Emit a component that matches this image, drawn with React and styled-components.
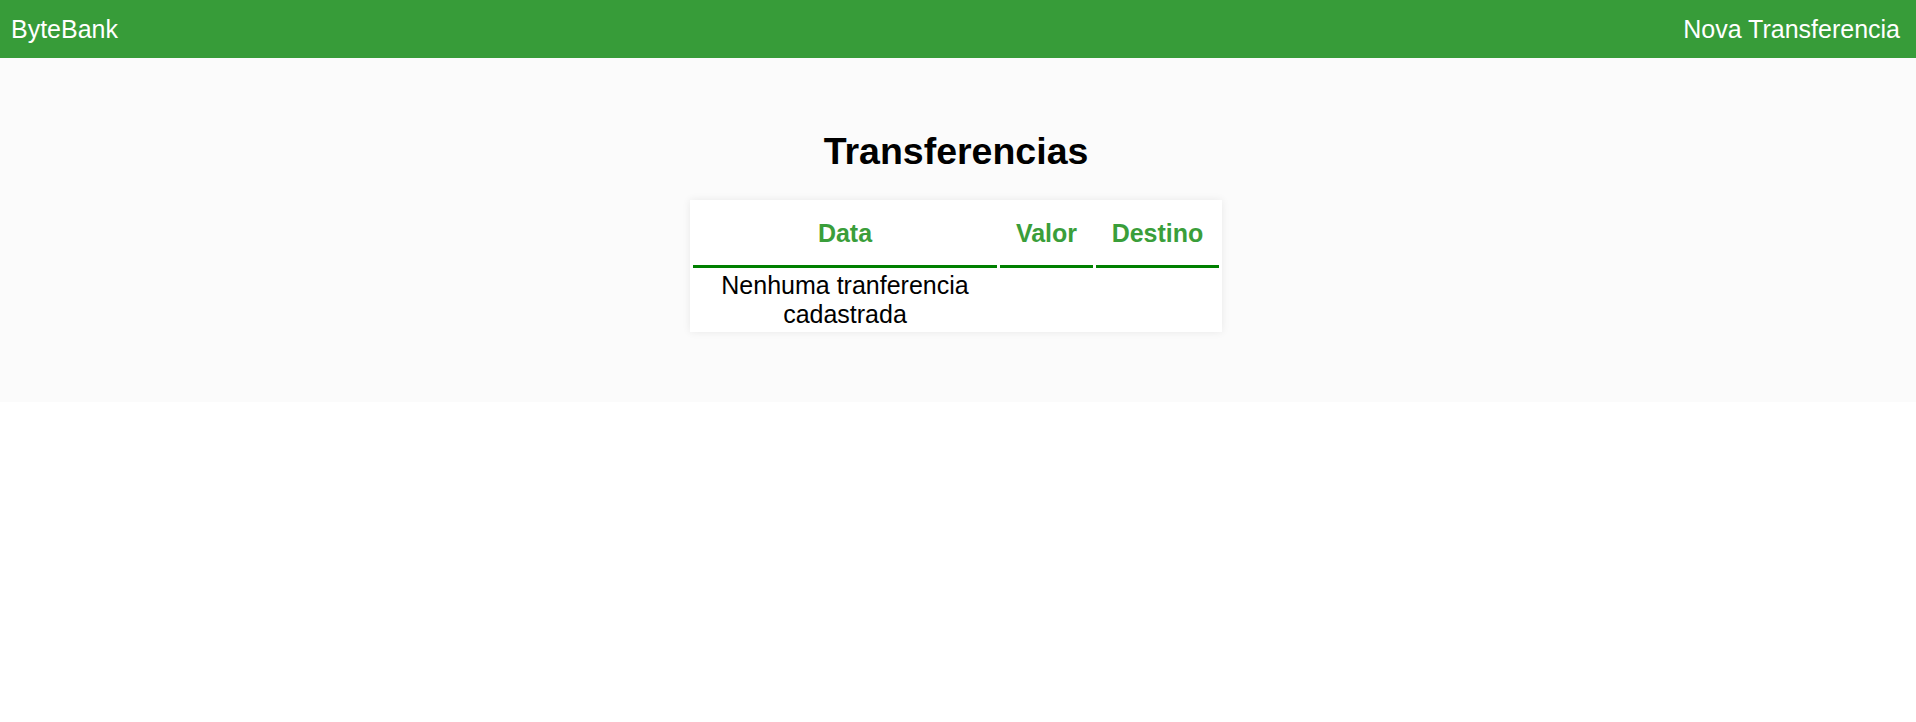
import { styled, createGlobalStyle } from "styled-components";

const GlobalStyle = createGlobalStyle`
    body {
        margin: 0;
        background-color: #ffffff;
        font-family: "Liberation Sans", Arial, sans-serif;
    }
`
const Header = styled.header`
    display: flex;
    justify-content: space-between;
    align-items: center;
    height: 58px;
    padding: 0 16px 0 11px;
    background-color: #379c39;
    color: #ffffff;
    font-size: 25px;
`
const HeaderLink = styled.a`
    color: inherit;
    text-decoration: none;
    cursor: pointer;
`
const Main = styled.main`
    display: flex;
    flex-direction: column;
    align-items: center;
    height: 344px;
    box-sizing: border-box;
    padding: 72px 4px 0 0;
    background-color: #fbfbfb;
`
const Title = styled.h1`
    margin: 0 0 27px;
    font-size: 37.5px;
    font-weight: bold;
    color: #000000;
`
const Table = styled.table`
    width: 532px;
    table-layout: fixed;
    border-spacing: 3px;
    background-color: #ffffff;
    box-shadow: 0 0 8px rgba(0, 0, 0, 0.08);
`
const HeadCell = styled.th`
    padding: 16px 0 17px;
    border-bottom: 3px solid #008000;
    color: #3a9e3a;
    font-size: 25px;
    font-weight: bold;
    text-align: center;
`
const Cell = styled.td`
    padding: 0;
    color: #000000;
    font-size: 25px;
    text-align: center;
    vertical-align: middle;
`

const App = () => {
    const transferencias = [];

    return (
        <>
            <GlobalStyle />
            <Header>
                <HeaderLink>ByteBank</HeaderLink>
                <HeaderLink>Nova Transferencia</HeaderLink>
            </Header>
            <Main>
                <Title>Transferencias</Title>
                <Table>
                    <colgroup>
                        <col style={{ width: 304 }} />
                        <col style={{ width: 93 }} />
                        <col style={{ width: 123 }} />
                    </colgroup>
                    <thead>
                        <tr>
                            <HeadCell>Data</HeadCell>
                            <HeadCell>Valor</HeadCell>
                            <HeadCell>Destino</HeadCell>
                        </tr>
                    </thead>
                    <tbody>
                        {transferencias.length === 0 && (
                            <tr>
                                <Cell>Nenhuma tranferencia cadastrada</Cell>
                                <Cell></Cell>
                                <Cell></Cell>
                            </tr>
                        )}
                    </tbody>
                </Table>
            </Main>
        </>
    )
}

export default App;
